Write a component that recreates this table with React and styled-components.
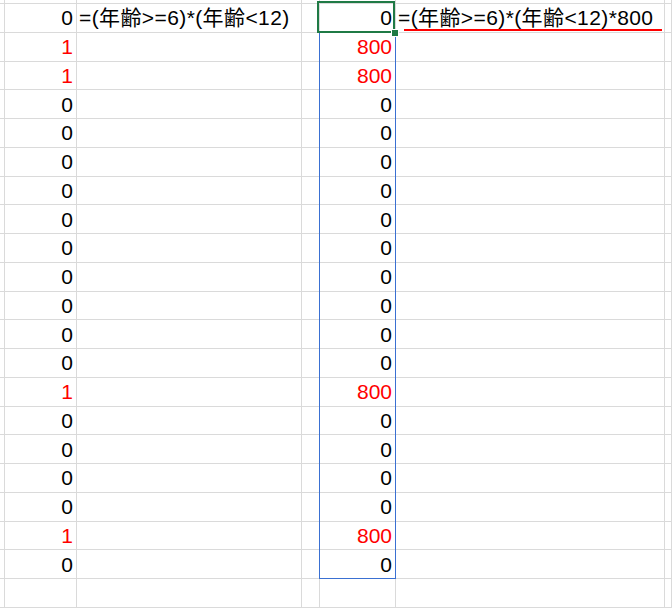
import React from "react";
import styled, { createGlobalStyle } from "styled-components";

const Global = createGlobalStyle`
  html, body { margin: 0; padding: 0; background: #fff; }
  body { font-family: "Liberation Sans", "Noto Sans CJK JP", sans-serif; overflow: hidden; }
`;

const COLS = [5, 72, 225, 18, 76, 269];
const ROW_H = 28.762;
const ROWS = 21;

const Sheet = styled.div`
  display: grid;
  grid-template-columns: ${COLS.map((c) => c + "px").join(" ")} 1fr;
  grid-template-rows: 4px repeat(${ROWS}, ${ROW_H}px);
  width: 672px;
  height: 608px;
  overflow: hidden;
`;

const Cell = styled.div`
  box-sizing: border-box;
  border-right: 1px solid #dadada;
  border-bottom: 1px solid #dadada;
  display: flex;
  align-items: center;
  justify-content: ${(p) => (p.$num ? "flex-end" : "flex-start")};
  padding: ${(p) => (p.$num ? "0 3px 0 0" : "0 0 0 2px")};
  font-family: "Liberation Sans", "Noto Sans CJK JP", sans-serif;
  font-size: 21px;
  letter-spacing: ${(p) => (p.$num ? "0" : "0.4px")};
  line-height: 1;
  color: ${(p) => (p.$red ? "#ff0000" : "#000")};
  white-space: nowrap;
  position: relative;
  grid-row: ${(p) => p.$row};
  grid-column: ${(p) => p.$col};
`;

const Underline = styled.span`
  position: absolute;
  left: 8px;
  right: 2px;
  top: 24.5px;
  height: 2px;
  background: #ff0000;
`;

const RangeBox = styled.div`
  grid-column: 5;
  grid-row: 3 / ${ROWS + 1};
  margin: -1px 0 0 -1px;
  border: 1px solid #3a70d2;
  pointer-events: none;
  z-index: 1;
`;

const ActiveBox = styled.div`
  grid-column: 5;
  grid-row: 2;
  margin: -3px 1px 0 -3px;
  border: 2px solid #1f7a45;
  position: relative;
  pointer-events: none;
  z-index: 2;
`;

const Handle = styled.span`
  position: absolute;
  right: -5px;
  bottom: -5px;
  width: 6px;
  height: 6px;
  background: #1f7a45;
  box-shadow: 0 0 0 1px #fff;
`;

const flags = [0, 1, 1, 0, 0, 0, 0, 0, 0, 0, 0, 0, 0, 1, 0, 0, 0, 0, 1, 0];

export default function App() {
  const cells = [];
  for (let r = 0; r < ROWS + 1; r++) {
    for (let c = 0; c < COLS.length + 1; c++) {
      let content = null;
      let num = false;
      let red = false;
      const dataIdx = r - 1;
      if (dataIdx >= 0 && dataIdx < flags.length) {
        const v = flags[dataIdx];
        if (c === 1) {
          content = String(v);
          num = true;
          red = v === 1;
        } else if (c === 4) {
          content = String(v * 800);
          num = true;
          red = v === 1;
        } else if (dataIdx === 0 && c === 2) {
          content = "=(年齢>=6)*(年齢<12)";
        } else if (dataIdx === 0 && c === 5) {
          content = (
            <>
              =(年齢&gt;=6)*(年齢&lt;12)*800
              <Underline />
            </>
          );
        }
      }
      cells.push(
        <Cell key={r + "-" + c} $row={r + 1} $col={c + 1} $num={num} $red={red}>
          {content}
        </Cell>
      );
    }
  }
  return (
    <>
      <Global />
      <Sheet>
        {cells}
        <RangeBox />
        <ActiveBox>
          <Handle />
        </ActiveBox>
      </Sheet>
    </>
  );
}
